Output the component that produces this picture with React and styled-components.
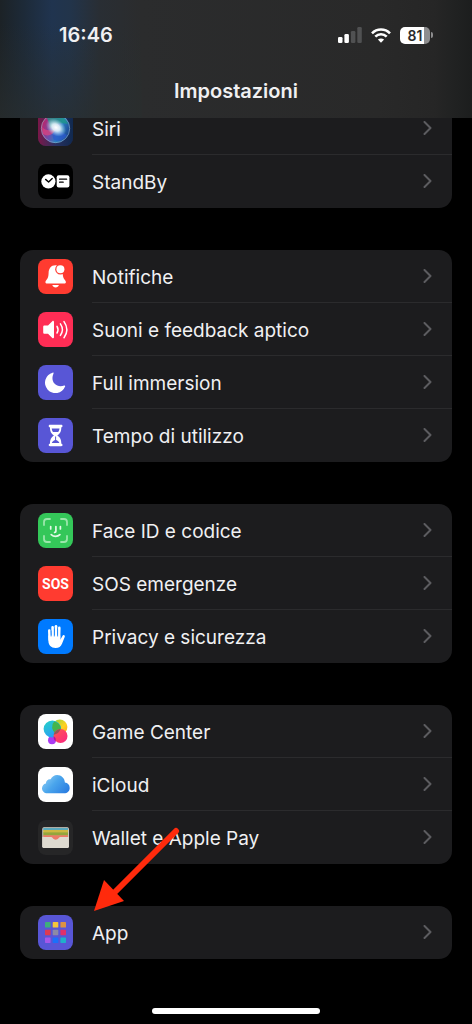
import React from 'react'
import styled, { createGlobalStyle } from 'styled-components'

const SiriIcon = () => <svg viewBox='0 0 35 35'>
    <defs>
        <linearGradient id='siriBg' x1='0' y1='0' x2='1' y2='0'>
            <stop offset='0' stopColor='#7a1748' />
            <stop offset='.5' stopColor='#2a3160' />
            <stop offset='1' stopColor='#10294f' />
        </linearGradient>
        <linearGradient id='siriOrb' x1='0' y1='.3' x2='1' y2='.7'>
            <stop offset='0' stopColor='#c41f63' />
            <stop offset='.4' stopColor='#6b4fae' />
            <stop offset='.65' stopColor='#2b7fc0' />
            <stop offset='1' stopColor='#1b3f8c' />
        </linearGradient>
        <radialGradient id='siriGlow'>
            <stop offset='0' stopColor='#fff' />
            <stop offset='.4' stopColor='#e6f4fb' stopOpacity='.9' />
            <stop offset='1' stopColor='#9fd8ee' stopOpacity='0' />
        </radialGradient>
    </defs>
    <rect width='35' height='35' fill='url(#siriBg)' />
    <circle cx='17.5' cy='17.5' r='14.5' fill='url(#siriOrb)' />
    <path d='M9 7c7-5 18-3 21 6-8-2-13 0-17 4z' fill='#1c9a86' opacity='.75' />
    <path d='M17 18c5 0 9 5 12 6-3 5-9 7-13 5-2-3-2-8 1-11z' fill='#2c58cf' opacity='.7' />
    <path d='M4 16c4 5 10 3 14 2-3 6-8 8-13 5z' fill='#e0457f' opacity='.7' />
    <ellipse cx='18' cy='16.5' rx='11' ry='8' fill='url(#siriGlow)' transform='rotate(35 18 16.5)' />
    <circle cx='17.5' cy='17.5' r='14.2' fill='none' stroke='#8db4c8' strokeOpacity='.6' strokeWidth='1' />
</svg>

const StandByIcon = () => <svg viewBox='0 0 35 35'>
    <circle cx='10.4' cy='17.4' r='7.1' fill='#fff' />
    <path d='M7.6 15.4l3 2.6 3.6-3.4' fill='none' stroke='#000' strokeWidth='1.4' strokeLinecap='round' strokeLinejoin='round' />
    <rect x='18.7' y='11.2' width='12.7' height='12.4' rx='2' fill='#fff' />
    <path d='M21.6 15.2h7M21.6 18.2h3.6' stroke='#000' strokeWidth='1.3' strokeLinecap='round' />
</svg>

const BellIcon = () => <svg viewBox='0 0 35 35'>
    <path d='M17.6 6.2c-4.8 0-6.9 3.4-7 7.8-.1 3.5-.6 5.2-2 6.8-.8.9-1.2 1.5-1.2 2.2 0 1 .7 1.6 1.8 1.6h16.9c1.1 0 1.8-.6 1.8-1.6 0-.7-.4-1.3-1.2-2.2-1.4-1.6-1.9-3.3-2-6.8-.1-4.4-2.3-7.8-7.1-7.8z' fill='#fff' />
    <path d='M14.3 26h6.6c-.4 1.6-1.7 2.5-3.3 2.5s-2.9-.9-3.3-2.5z' fill='#fff' />
    <circle cx='22.4' cy='10.3' r='5.2' fill='#ff3b30' />
    <circle cx='22.4' cy='10.3' r='4' fill='#fff' />
</svg>

const SpeakerIcon = () => <svg viewBox='0 0 35 35'>
    <path d='M6.6 13.6h3.4l4.3-4.4c.7-.7 1.7-.4 1.7.7v15.4c0 1.1-1 1.3-1.7.7L10 21.8H6.6c-.9 0-1.4-.5-1.4-1.4V15c0-.9.5-1.4 1.4-1.4z' fill='#fff' />
    <g fill='none' stroke='#fff' strokeWidth='1.5' strokeLinecap='round'>
        <path d='M19 14.3c1.3 2.1 1.3 4.6 0 6.7' />
        <path d='M22.4 11.9c2.5 3.6 2.5 7.9 0 11.5' />
        <path d='M26 9.6c3.7 5.2 3.7 10.9 0 16.1' />
    </g>
</svg>

const MoonIcon = () => <svg viewBox='0 0 35 35'>
    <path d='M14.6 7.7A10.4 10.4 0 1 0 27.1 21.5c.3-.7-.2-1.1-.9-.9C18 23.3 11.9 16.5 15.5 8.4c.3-.7-.3-1-.9-.7z' fill='#fff' />
</svg>

const HourglassIcon = () => <svg viewBox='0 0 35 35'>
    <path d='M12 6.8h11.2c.8 0 1.3.5 1.3 1.2s-.5 1.3-1.2 1.3c0 4.2-1.1 6.1-4 8.2 2.9 2 4 4 4 8.2.7 0 1.2.5 1.2 1.3s-.5 1.2-1.3 1.2H12c-.8 0-1.3-.5-1.3-1.2s.5-1.3 1.2-1.3c0-4.2 1.2-6.2 4-8.2-2.8-2-4-4-4-8.2-.7 0-1.2-.5-1.2-1.3s.5-1.2 1.3-1.2z' fill='#fff' />
    <path d='M13.7 10.6h7.8c-.2 1.5-.6 2.5-1.3 3.3H15c-.7-.8-1.1-1.8-1.3-3.3zM17.1 18.5h1v3.6c1.6.5 2.8 1.5 3.3 3h-7.6c.5-1.5 1.7-2.5 3.3-3z' fill='#5856d6' />
</svg>

const FaceIdIcon = () => <svg viewBox='0 0 35 35' fill='none' strokeLinecap='round'>
    <path d='M6 12V9c0-2 1-3 3-3h3M23 6h3c2 0 3 1 3 3v3M29 23v3c0 2-1 3-3 3h-3M12 29H9c-2 0-3-1-3-3v-3' stroke='#9be6ab' strokeWidth='1.8' />
    <path d='M12.7 13.6v2.3M22.4 13.6v2.3M17.9 13.6v4.6c0 .9-.4 1.2-1.3 1.2M13.2 21.6c2.5 2.3 6.3 2.3 8.7 0' stroke='#e3f9e7' strokeWidth='1.7' />
</svg>

const HandIcon = () => <svg viewBox='0 0 35 35'>
    <g stroke='#fff' strokeLinecap='round' strokeWidth='2.6'>
        <path d='M11.3 11.6l.4 9' />
        <path d='M14.6 8.2l.3 11' />
        <path d='M18 7.2v12' />
        <path d='M21.3 8.9l-.3 11' />
    </g>
    <path d='M10.3 16.5h12v4.2l2-3.5c.5-1 1.2-1.3 1.9-1s.8 1 .5 1.9l-2.6 6.3c-1.2 3-3.2 4.5-6.5 4.5-4.6 0-7.1-2.4-7.2-7.1z' fill='#fff' />
    <path d='M13.1 11.5v6M16.3 9.5v8M19.6 9.5v8' stroke='#007aff' strokeWidth='.7' />
</svg>

const GameCenterIcon = () => <svg viewBox='0 0 35 35'>
    <defs>
        <linearGradient id='gcBlue' x1='0' y1='0' x2='.5' y2='1'>
            <stop offset='0' stopColor='#25d3c5' />
            <stop offset='1' stopColor='#2a9df5' />
        </linearGradient>
        <linearGradient id='gcYellow' x1='0' y1='0' x2='1' y2='1'>
            <stop offset='0' stopColor='#8bd43c' />
            <stop offset='.6' stopColor='#ffd21f' />
            <stop offset='1' stopColor='#ff9e1b' />
        </linearGradient>
        <linearGradient id='gcPink' x1='0' y1='0' x2='1' y2='1'>
            <stop offset='0' stopColor='#ff5a4c' />
            <stop offset='1' stopColor='#fa2384' />
        </linearGradient>
    </defs>
    <circle cx='21.8' cy='13' r='7.6' fill='url(#gcYellow)' />
    <circle cx='14' cy='26.2' r='4' fill='#a93bf2' />
    <ellipse cx='14.4' cy='15' rx='8.8' ry='8.6' fill='url(#gcBlue)' />
    <path d='M16.2 7.6a7.6 7.6 0 0 0 1.7 11.9 8.7 8.7 0 0 0 5-4.9 8.6 8.6 0 0 0-6.7-7z' fill='#48b53a' opacity='.9' />
    <circle cx='22.5' cy='22' r='7' fill='url(#gcPink)' />
    <path d='M15.6 20.8a8.8 8.8 0 0 0 7-5.7 7 7 0 0 0-7 5.7z' fill='#7b5a55' opacity='.8' />
    <path d='M15.6 22.3a4 4 0 0 1 1.7 5.2 7 7 0 0 1-1.7-5.2z' fill='#b5179e' />
</svg>

const CloudIcon = () => <svg viewBox='0 0 35 35'>
    <defs>
        <linearGradient id='cloudFill' x1='0' y1='.2' x2='1' y2='.8'>
            <stop offset='0' stopColor='#8ccdf5' />
            <stop offset='.45' stopColor='#4aa5ec' />
            <stop offset='1' stopColor='#2a7de1' />
        </linearGradient>
    </defs>
    <path d='M9.3 26.3C6.2 26.3 4 24.2 4 21.3c0-2.5 1.6-4.4 3.9-4.9.1-2.7 2-4.4 4.7-4.1C14 9.6 16.2 8 19.1 8c4.3 0 7.6 3.3 7.8 7.6 2.9.4 4.8 2.5 4.8 5.3 0 3.1-2.3 5.4-5.6 5.4z' fill='url(#cloudFill)' />
</svg>

const WalletIcon = () => <svg viewBox='0 0 35 35'>
    <defs>
        <clipPath id='walletClip'><rect x='4.3' y='7.3' width='26.6' height='20.6' rx='1.6' /></clipPath>
    </defs>
    <g clipPath='url(#walletClip)'>
        <rect x='4' y='7' width='28' height='22' fill='#dedad0' />
        <rect x='5.2' y='8' width='24.8' height='2.6' fill='#5ba9bd' />
        <rect x='5.2' y='10' width='24.8' height='3' fill='#cdb842' />
        <rect x='5.2' y='12.4' width='24.8' height='3.4' fill='#93a63c' />
        <rect x='5.2' y='15.3' width='24.8' height='6' fill='#ec7a68' />
        <path d='M4 17h9c.8 0 1.2.4 1.7 1 1.600 2.300 4.400 2.300 6 0 .5-.6.9-1 1.700-1H32v12H4z' fill='#dedad0' />
    </g>
</svg>

const appColors = ['#3fae7c', '#f5c63c', '#dc9242', '#dd3a52', '#8c8aa5', '#e0306c', '#a557ea', '#1a70fb', '#20b0ca']

const AppGridIcon = () => <svg viewBox='0 0 35 35'>
    {appColors.map((color, i) => <rect key={color} x={7 + (i % 3) * 7.7} y={7 + Math.floor(i / 3) * 7.7}
        width='5.6' height='5.6' rx='.7' fill={color} />)}
</svg>

const Chevron = () => <svg width='9' height='14' viewBox='0 0 9 14' aria-hidden='true'>
    <path d='M1.5 1l6 6-6 6' fill='none' stroke='#5c5c60' strokeWidth='2' strokeLinecap='round' strokeLinejoin='round' />
</svg>

const groups = [
    [
        { name: 'Siri', bg: '#2a2040', icon: <SiriIcon /> },
        { name: 'StandBy', bg: '#000', icon: <StandByIcon /> },
    ],
    [
        { name: 'Notifiche', bg: '#ff3b30', icon: <BellIcon /> },
        { name: 'Suoni e feedback aptico', bg: '#ff2d55', icon: <SpeakerIcon /> },
        { name: 'Full immersion', bg: '#5856d6', icon: <MoonIcon /> },
        { name: 'Tempo di utilizzo', bg: '#5856d6', icon: <HourglassIcon /> },
    ],
    [
        { name: 'Face ID e codice', bg: '#34c759', icon: <FaceIdIcon /> },
        { name: 'SOS emergenze', bg: '#ff3b30', icon: 'SOS' },
        { name: 'Privacy e sicurezza', bg: '#007aff', icon: <HandIcon /> },
    ],
    [
        { name: 'Game Center', bg: '#fff', icon: <GameCenterIcon /> },
        { name: 'iCloud', bg: '#fff', icon: <CloudIcon /> },
        { name: 'Wallet e Apple Pay', bg: '#262627', icon: <WalletIcon /> },
    ],
    [
        { name: 'App', bg: '#5856d6', icon: <AppGridIcon />, pointed: true },
    ],
]

const SettingsRow = ({ name, bg, icon, pointed }) => <Row>
    <RowLink href='#'>
        <IconTile $bg={bg} aria-hidden='true'>{icon}</IconTile>
        <RowBody>
            <RowName>{name}</RowName>
            <Chevron />
        </RowBody>
    </RowLink>
    {pointed && <Arrow viewBox='0 0 88 86' aria-hidden='true'>
        <path d='M83 5L22 66' stroke='#ff2a0c' strokeWidth='6' strokeLinecap='round' />
        <path d='M1 85L11 54L31 75z' fill='#ff2a0c' />
    </Arrow>}
</Row>

const StatusBar = () => <Status>
    <time>16:46</time>
    <StatusIcons>
        <svg width='24' height='16' viewBox='0 0 24 16' aria-hidden='true'>
            <rect x='0' y='10' width='4.5' height='6' rx='1.3' fill='#fff' />
            <rect x='6.4' y='7' width='4.5' height='9' rx='1.3' fill='#fff' />
            <rect x='12.9' y='4' width='4.5' height='12' rx='1.3' fill='#505152' />
            <rect x='19.3' y='0' width='4.5' height='16' rx='1.3' fill='#505152' />
        </svg>
        <svg width='20' height='15' viewBox='0 0 20 15' aria-hidden='true'>
            <g fill='none' stroke='#fff' strokeWidth='2.6'>
                <path d='M1 5.3c5-5 13-5 18 0' />
                <path d='M4.3 8.7c3.2-3.2 8.2-3.2 11.4 0' />
            </g>
            <path d='M10 14.8l-3.1-3.2c1.8-1.6 4.4-1.6 6.2 0z' fill='#fff' />
        </svg>
        <BatteryWrap>
            <Battery>81</Battery>
            <BatteryCap />
        </BatteryWrap>
    </StatusIcons>
</Status>

const App = () => {
    return <>
        <GlobalStyle />
        <Page>
            <Header>
                <StatusBar />
                <h1>Impostazioni</h1>
            </Header>
            <Groups>
                {groups.map((rows) => <Group key={rows[0].name}>
                    {rows.map((row) => <SettingsRow key={row.name} {...row} />)}
                </Group>)}
            </Groups>
            <HomeBar><span /></HomeBar>
        </Page>
    </>
}

const GlobalStyle = createGlobalStyle`
*{
    box-sizing: border-box;
    margin: 0;
    padding: 0;
}

body{
    background-color: #000;
    color: #f0f0f2;
    font-family: Inter, 'Liberation Sans', sans-serif;
    font-size: 20px;
    line-height: 24px;
}
`

const Page = styled.div`
min-height: 100vh;
display: flex;
flex-direction: column;
`

const Header = styled.header`
position: sticky;
top: 0;
z-index: 2;
height: 118px;
padding-top: 23px;
background:
    linear-gradient(to bottom, rgba(41,44,44,0) 20%, rgba(41,46,46,.7) 100%) left / 30% 100% no-repeat,
    linear-gradient(to right, #1c2226 0%, #1d2a38 5%, #20344f 11%, #22344a 15%, #292e34 21%, #2b2c2d 30%, #292929 80%, #262626 92%, #1c1e1e 100%);

h1{
    margin-top: 32px;
    font-size: 20px;
    font-weight: 600;
    line-height: 24px;
    text-align: center;
}
`

const Status = styled.div`
display: flex;
align-items: center;
justify-content: space-between;
padding: 0 39px 0 59px;

time{
    font-weight: 600;
}
`

const StatusIcons = styled.div`
display: flex;
align-items: center;
gap: 9px;
`

const BatteryWrap = styled.div`
display: flex;
align-items: center;
gap: 1px;
`

const Battery = styled.span`
width: 30px;
height: 17px;
border-radius: 5px;
background: linear-gradient(to right, #fff 81%, #8d8d8e 81%);
color: #2a2a2a;
font-size: 14px;
font-weight: 600;
line-height: 17px;
text-align: center;
`

const BatteryCap = styled.span`
width: 2px;
height: 6px;
border-radius: 0 2px 2px 0;
background-color: #8d8d8e;
`

const Groups = styled.main`
display: flex;
flex-direction: column;
gap: 42px;
margin-top: -16px;
padding: 0 20px;
`

const Group = styled.ul`
list-style: none;
border-radius: 13px;
background-color: #1c1c1e;
`

const RowBody = styled.span`
flex: 1;
display: flex;
align-items: center;
justify-content: space-between;
height: 53px;
padding-right: 20px;
border-bottom: 1px solid #2b2b2d;
`

const RowName = styled.span`
padding-top: 4px;
font-size: 19px;
`

const Row = styled.li`
position: relative;

&:last-child ${RowBody}{
    border-bottom-color: transparent;
}
`

const RowLink = styled.a`
display: flex;
align-items: center;
gap: 19px;
padding-left: 18px;
color: inherit;
text-decoration: none;
`

const IconTile = styled.span`
display: flex;
align-items: center;
justify-content: center;
width: 35px;
height: 35px;
border-radius: 8px;
overflow: hidden;
background-color: ${({ $bg }) => $bg};
color: #fff;
font-family: Roboto, sans-serif;
font-size: 14px;
font-weight: 700;

svg{
    width: 35px;
    height: 35px;
}
`

const Arrow = styled.svg`
position: absolute;
left: 73px;
top: -80px;
width: 88px;
height: 86px;
pointer-events: none;
`

const HomeBar = styled.footer`
display: flex;
justify-content: center;
margin-top: auto;
padding: 24px 0 10px;

span{
    width: 168px;
    height: 6px;
    border-radius: 3px;
    background-color: #fff;
}
`

export default App
